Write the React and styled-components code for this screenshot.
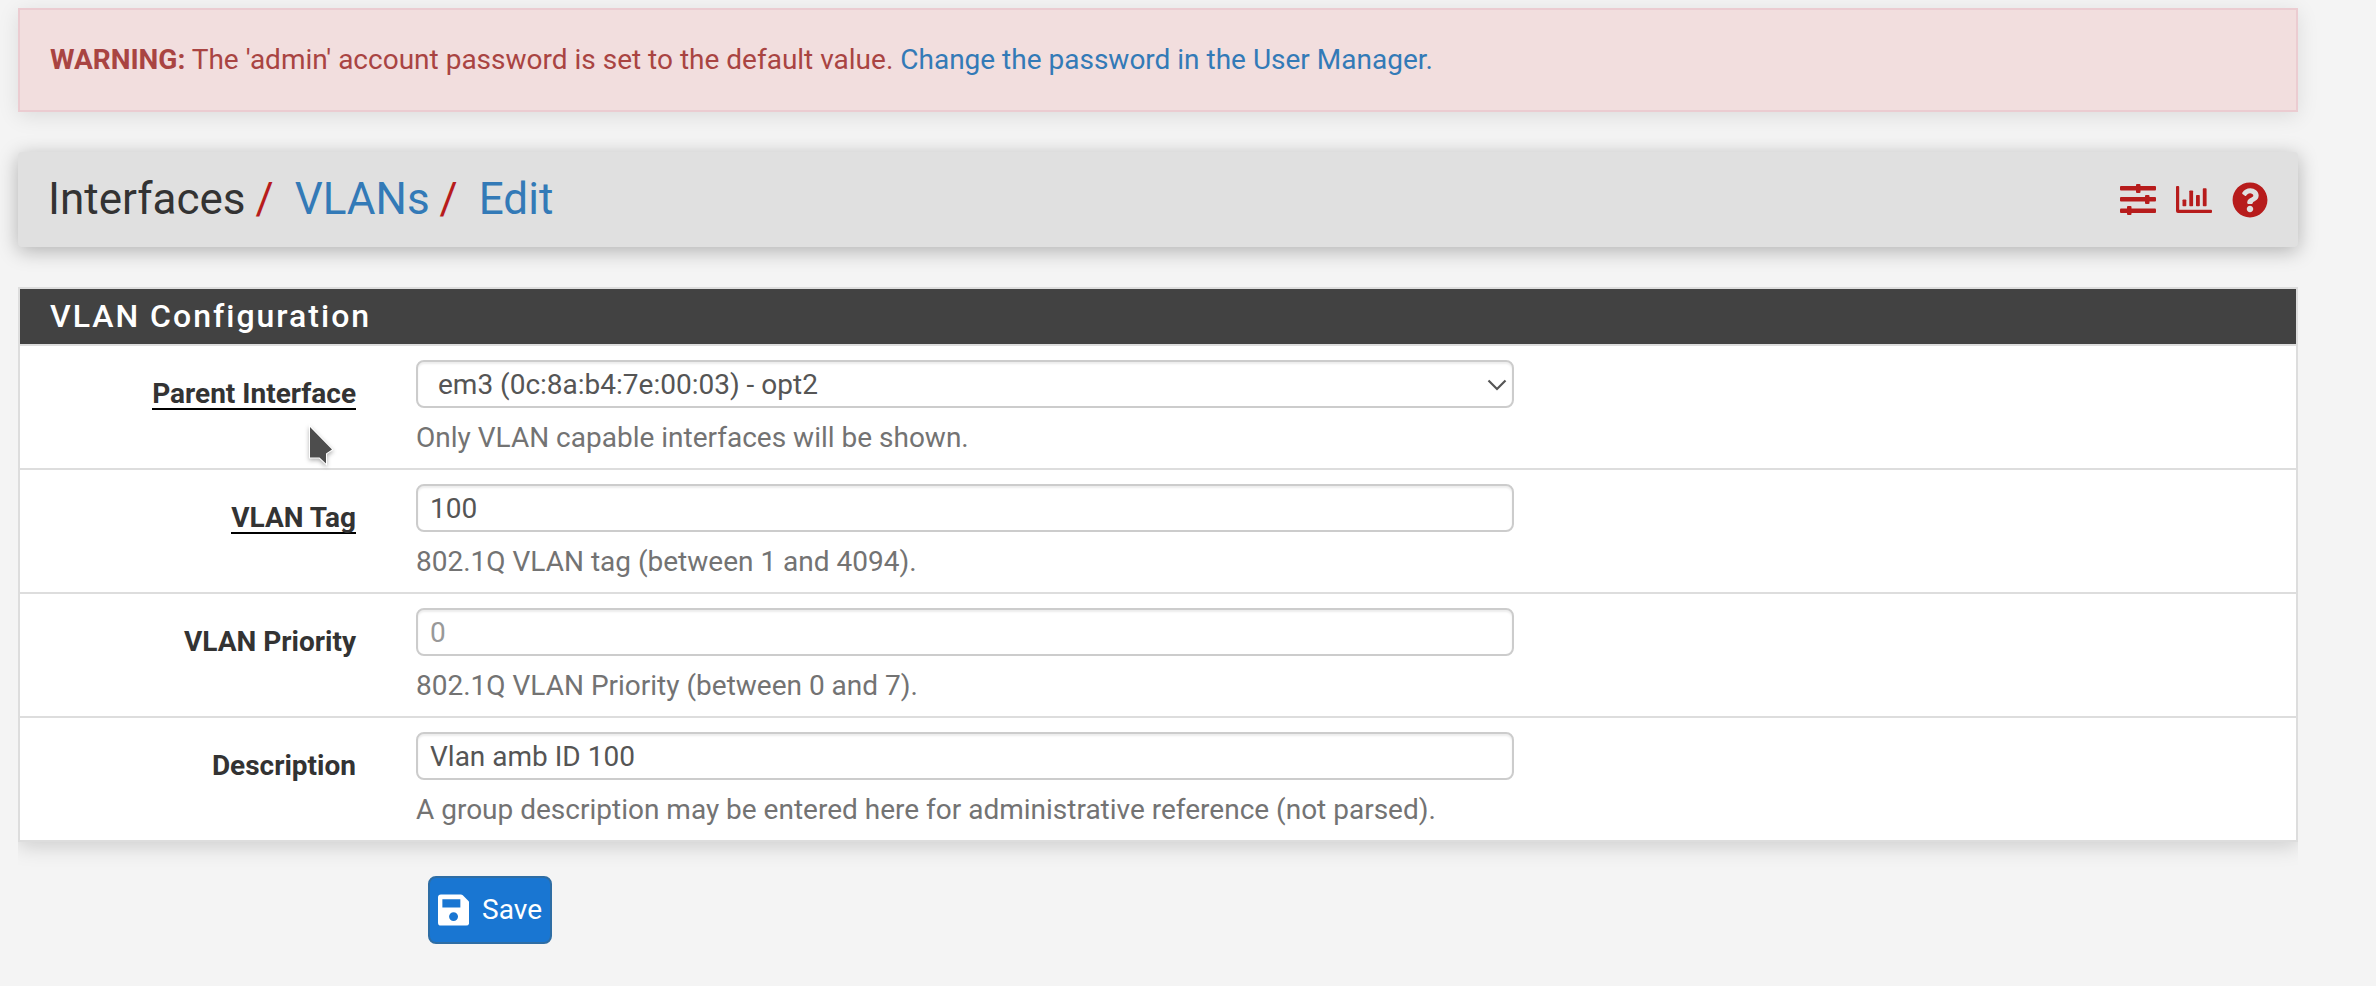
import React from 'react';
import styled, { createGlobalStyle } from 'styled-components';

const Global = createGlobalStyle`
  *, *::before, *::after { box-sizing: border-box; }
  html, body { margin: 0; background: #f4f4f4; }
  body {
    font-family: Roboto, "Liberation Sans", sans-serif;
    font-size: 28px;
    line-height: 40px;
    color: #333;
  }
`;

const Page = styled.main`
  width: 2376px;
  height: 986px;
  overflow: hidden;
  padding: 8px 78px 0 18px;
  background: #f4f4f4;
`;

const Alert = styled.div`
  height: 104px;
  padding: 30px;
  border: 2px solid #ebccd1;
  background: #f2dede;
  color: #a94442;
  box-shadow: 0 4px 20px rgba(0, 0, 0, 0.1);
`;

const Link = styled.a`
  color: #337ab7;
  text-decoration: none;
`;

const Header = styled.header`
  display: flex;
  align-items: center;
  justify-content: space-between;
  height: 95px;
  margin-top: 40px;
  padding: 0 30px 0 30px;
  border-radius: 4px;
  background: #e0e0e0;
  box-shadow: 0 4px 20px rgba(0, 0, 0, 0.28);
`;

const Crumbs = styled.nav`
  display: flex;
  padding-bottom: 1px;
  font-size: 44px;
  line-height: 48px;
`;

const Slash = styled.span`
  margin: 0 21px 0 10px;
  color: #b71c1c;
`;

const Tools = styled.div`
  display: flex;
  gap: 20px;
  color: #b71c1c;
`;

const Glyph = styled.svg`
  display: block;
  width: ${(p) => p.$size || 36}px;
  height: ${(p) => p.$size || 36}px;
`;

const Panel = styled.section`
  margin-top: 40px;
  border: 2px solid #ddd;
  background: #fff;
  box-shadow: 0 4px 20px rgba(0, 0, 0, 0.17);
  clip-path: inset(0 0 -40px 0);
`;

const PanelTitle = styled.h2`
  height: 55px;
  margin: 0;
  padding: 0 30px;
  background: #424242;
  color: #fff;
  font-size: 32px;
  font-weight: 500;
  line-height: 54px;
  letter-spacing: 2px;
`;

const Row = styled.div`
  display: grid;
  grid-template-columns: 336px 1098px;
  column-gap: 60px;
  height: 124px;
  border-top: 2px solid #ddd;
  padding-top: 14px;
`;

const LabelCell = styled.div`
  padding-top: 14px;
  text-align: right;
  font-weight: 700;
`;

const Label = styled.span`
  display: inline-block;
  height: 36px;
  border-bottom: ${(p) => (p.$required ? '2px solid #000' : '0')};
`;

const control = `
  display: flex;
  align-items: center;
  width: 1098px;
  height: 48px;
  border: 2px solid #ccc;
  border-radius: 8px;
  background: #fff;
  box-shadow: inset 0 2px 2px rgba(0, 0, 0, 0.075);
  color: #555;
  font: 28px/40px Roboto, "Liberation Sans", sans-serif;
`;

const Input = styled.input`
  ${control}
  padding: 0 12px;
  outline: 0;
  &::placeholder { color: #999; opacity: 1; }
`;

const Select = styled.button`
  ${control}
  justify-content: space-between;
  padding: 2px 4px 0 20px;
`;

const Help = styled.p`
  margin: 10px 0 0;
  color: #737373;
`;

const Save = styled.button`
  display: flex;
  align-items: center;
  gap: 13px;
  width: 124px;
  height: 68px;
  margin: 34px 0 0 410px;
  padding: 0 8px;
  border: 2px solid #2e6da4;
  border-radius: 8px;
  background: #1976d2;
  color: #fff;
  font: 28px/40px Roboto, "Liberation Sans", sans-serif;
`;

const Pointer = styled.svg`
  position: absolute;
  left: 302px;
  top: 420px;
  width: 40px;
  height: 52px;
  filter: drop-shadow(0 2px 2px rgba(0, 0, 0, 0.3));
`;

function Sliders() {
  return (
    <Glyph viewBox="0 0 36 36" fill="currentColor">
      <rect y="4" width="36" height="4.5" rx="1" />
      <rect y="15" width="36" height="4.5" rx="1" />
      <rect y="26.5" width="36" height="4.5" rx="1" />
      <rect x="16" y="2" width="4.5" height="9" rx="1" />
      <rect x="25" y="13" width="4.5" height="9" rx="1" />
      <rect x="7" y="24" width="4.5" height="9" rx="1" />
    </Glyph>
  );
}

function Chart() {
  return (
    <Glyph viewBox="0 0 36 36" fill="currentColor">
      <path d="M1 4h1.2a1 1 0 0 1 1 1v22.800h31.800a1 1 0 0 1 1 1V30a1 1 0 0 1-1 1H2a2 2 0 0 1-2-2V5a1 1 0 0 1 1-1z" />
      <rect x="6.500" y="17.500" width="3.800" height="6.700" rx="0.800" />
      <rect x="13.300" y="8.500" width="3.800" height="15.700" rx="0.800" />
      <rect x="20" y="13" width="3.800" height="11.200" rx="0.800" />
      <rect x="26.800" y="6.200" width="3.800" height="18" rx="0.800" />
    </Glyph>
  );
}

function Question() {
  return (
    <Glyph viewBox="0 0 512 512" fill="currentColor">
      <path d="M504 256c0 136.997-111.043 248-248 248S8 392.997 8 256C8 119.083 119.043 8 256 8s248 111.083 248 248zM262.655 90c-54.497 0-89.255 22.957-116.549 63.758-3.536 5.286-2.353 12.415 2.715 16.258l34.699 26.310c5.205 3.947 12.621 3.008 16.665-2.122 17.864-22.658 30.113-35.797 57.303-35.797 20.429 0 45.698 13.148 45.698 32.958 0 14.976-12.363 22.667-32.534 33.976C247.128 238.528 216 254.941 216 296v4c0 6.627 5.373 12 12 12h56c6.627 0 12-5.373 12-12v-1.333c0-28.462 83.186-29.647 83.186-106.667 0-58.002-60.165-102-116.531-102zM256 338c-25.365 0-46 20.635-46 46 0 25.364 20.635 46 46 46s46-20.636 46-46c0-25.365-20.635-46-46-46z" />
    </Glyph>
  );
}

const fields = [
  { label: 'Parent Interface', required: true, select: true, value: 'em3 (0c:8a:b4:7e:00:03) - opt2', help: 'Only VLAN capable interfaces will be shown.' },
  { label: 'VLAN Tag', required: true, value: '100', help: '802.1Q VLAN tag (between 1 and 4094).' },
  { label: 'VLAN Priority', placeholder: '0', help: '802.1Q VLAN Priority (between 0 and 7).' },
  { label: 'Description', value: 'Vlan amb ID 100', help: 'A group description may be entered here for administrative reference (not parsed).' },
];

function Field({ label, required, select, value, placeholder, help }) {
  return (
    <Row>
      <LabelCell><Label $required={required}>{label}</Label></LabelCell>
      <div>
        {select ? (
          <Select type="button">
            {value}
            <Glyph $size={22} viewBox="0 0 22 22" fill="none" stroke="#555" strokeWidth="2.200">
              <path d="M2.500 6.500 11 15l8.500-8.500" />
            </Glyph>
          </Select>
        ) : (
          <Input defaultValue={value} placeholder={placeholder} />
        )}
        <Help>{help}</Help>
      </div>
    </Row>
  );
}

export default function App() {
  return (
    <Page>
      <Global />
      <Alert>
        <strong>WARNING:</strong> The 'admin' account password is set to the default value.{' '}
        <Link>Change the password in the User Manager.</Link>
      </Alert>
      <Header>
        <Crumbs>
          <span>Interfaces</span>
          <Slash>/</Slash>
          <Link>VLANs</Link>
          <Slash>/</Slash>
          <Link>Edit</Link>
        </Crumbs>
        <Tools>
          <Sliders />
          <Chart />
          <Question />
        </Tools>
      </Header>
      <Panel>
        <PanelTitle>VLAN Configuration</PanelTitle>
        {fields.map((f) => <Field key={f.label} {...f} />)}
      </Panel>
      <Save type="button">
        <Glyph $size={32} viewBox="0 0 32 32" fill="#fff">
          <path fillRule="evenodd" d="M3 0h20.500a3 3 0 0 1 2 .9l5.600 5.600a3 3 0 0 1 .9 2V29a3 3 0 0 1-3 3H3a3 3 0 0 1-3-3V3a3 3 0 0 1 3-3zM4.500 5v8.500H23V5zM16 18.200a4.600 4.600 0 1 0 0 9.200 4.600 4.600 0 0 0 0-9.200z" />
        </Glyph>
        Save
      </Save>
      <Pointer viewBox="0 0 40 52">
        <path d="M8 7v30.500h9.500l6.500 6V33.500l6-4z" fill="#4d4d4d" stroke="#fff" strokeWidth="2" paintOrder="stroke" />
      </Pointer>
    </Page>
  );
}
